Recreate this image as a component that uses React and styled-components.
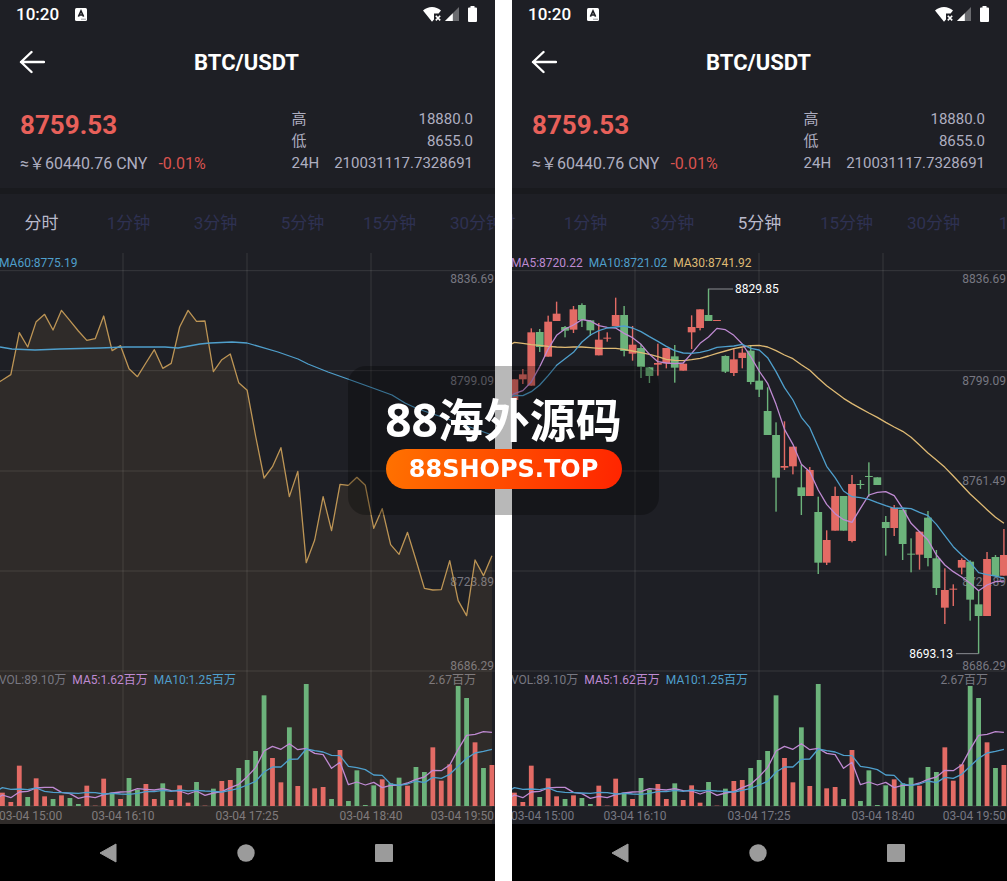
import React, { useLayoutEffect, useRef } from 'react'
import styled, { createGlobalStyle } from 'styled-components'

const RED = '#e36b65'
const GREEN = '#6cb37b'
const PURPLE = '#bf8ad2'
const BLUE = '#4f9fcc'
const GOLD = '#dfba74'
const AXIS = '#777781'

const GlobalStyle = createGlobalStyle`
  * {
    box-sizing: border-box;
  }
  body {
    margin: 0;
    background: #ffffff;
    font-family: Roboto, 'Noto Sans CJK SC', sans-serif;
  }
`

const Page = styled.main`
  display: grid;
  grid-template-columns: 1fr 1fr;
  gap: 17px;
`

const Phone = styled.section`
  display: flex;
  flex-direction: column;
  min-width: 0;
  overflow: hidden;
  background: #1e1f25;
  color: #ffffff;
`

const StatusBar = styled.div`
  display: flex;
  align-items: center;
  height: 28px;
  padding: 0 18px 0 16px;
`

const Clock = styled.span`
  margin-right: 16px;
  font-size: 17px;
  font-weight: 500;
  line-height: 28px;
`

const StatusIcons = styled.div`
  display: flex;
  align-items: center;
  gap: 4px;
  margin-left: auto;

  svg:last-child {
    margin-left: 5px;
  }
`

const Header = styled.header`
  display: grid;
  grid-template-columns: 40px 1fr 40px;
  align-items: center;
  height: 68px;
  padding: 0 14px 0 12px;
`

const BackButton = styled.button`
  display: flex;
  align-items: center;
  justify-content: center;
  height: 40px;
  padding: 0;
  border: 0;
  background: transparent;
  cursor: pointer;
`

const Title = styled.h1`
  margin: 0;
  font-size: 22px;
  font-weight: 700;
  text-align: center;
`

const Summary = styled.div`
  display: flex;
  justify-content: space-between;
  height: 98px;
  padding: 12px 22px 0 20px;
  border-bottom: 6px solid #191a1e;
  color: #aeaec0;
`

const Price = styled.div`
  font-size: 26px;
  font-weight: 700;
  line-height: 34px;
  color: #e8605a;
`

const Converted = styled.div`
  margin-top: 11px;
  font-size: 16px;
  line-height: 22px;
`

const Change = styled.span`
  margin-left: 11px;
  color: #d9534f;
`

const Stats = styled.dl`
  display: grid;
  grid-template-columns: auto auto;
  grid-auto-rows: 22px;
  column-gap: 15px;
  margin: 0;
  font-size: 15px;
  line-height: 23px;

  dd {
    margin: 0;
    text-align: right;
  }
`

const Tabs = styled.nav`
  display: flex;
  height: 51px;
  margin: 0 -2px;
  padding: 4px 0;
  overflow: hidden;
`

const Tab = styled.button`
  flex: 0 0 87px;
  padding: 7px 0 0;
  border: 0;
  background: transparent;
  font-family: inherit;
  font-size: 17px;
  line-height: 24px;
  color: ${(props) => (props.$active ? '#b9b9cb' : '#2e3152')};
  cursor: pointer;
`

const ChartSvg = styled.svg`
  display: block;
  width: 100%;
  height: auto;
  overflow: hidden;
`

const ChartText = styled.text`
  font-family: Roboto, 'Noto Sans CJK SC', sans-serif;
  font-size: 12px;
`

const NavBar = styled.footer`
  display: flex;
  align-items: center;
  justify-content: center;
  gap: 120px;
  height: 57px;
  padding-right: 4px;
  background: #000000;
`

const NavButton = styled.button`
  display: flex;
  padding: 0;
  border: 0;
  background: transparent;
  cursor: pointer;
`

const Overlay = styled.div`
  position: fixed;
  inset: 0;
  display: grid;
  place-items: center;
  pointer-events: none;
`

const Badge = styled.div`
  display: flex;
  flex-direction: column;
  align-items: center;
  gap: 7px;
  padding: 30px 37px 26px;
  border-radius: 18px;
  background: rgba(0, 0, 0, 0.28);
  color: #ffffff;
`

const BadgeTitle = styled.div`
  font-family: 'Noto Sans', 'Noto Sans CJK SC', sans-serif;
  font-size: 46px;
  font-weight: 700;
  line-height: 46px;
  white-space: nowrap;
`

const BadgePill = styled.div`
  width: 236px;
  border-radius: 20px;
  background: linear-gradient(100deg, #ff7200, #ff2400);
  font-family: 'DejaVu Sans', sans-serif;
  font-size: 24px;
  font-weight: 700;
  line-height: 40px;
  text-align: center;
`

// every chart series is stored in ticks, three ticks to a chart unit
const t = (ticks) => ticks / 3
const x = (i) => 2.4 + i * 8.44

const WIDTH = 495
const HEIGHT = 579
const BASE = 561
const VOLUME_TOP = 1260

const periods = ['分时', '1分钟', '3分钟', '5分钟', '15分钟', '30分钟', '1小时', '1天']

const rows = [77, 377, 678, 978, 1278]
const columns = [123, 247, 371]

const priceLabels = [
  ['8836.69', 38],
  ['8799.09', 140],
  ['8761.49', 240],
  ['8723.89', 341],
  ['8686.29', 425],
]

const timeLabels = [
  ['03-04 15:00', -1, 'start'],
  ['03-04 16:10', 123, 'middle'],
  ['03-04 17:25', 247, 'middle'],
  ['03-04 18:40', 371, 'middle'],
  ['03-04 19:50', 494, 'end'],
]

// u = up, d = down, ten to a row
const trend = [
  'uuuduududd',
  'uuududduud',
  'uuududuudd',
  'dduududuud',
  'udddduddud',
  'duuudduduu',
].join('')

const prices = [
  405, 389, 263, 306, 230, 208, 255, 196, 227, 258, 286, 281, 213, 317, 302, 371, 395, 354, 314, 370,
  355, 246, 196, 229, 228, 380, 344, 327, 413, 436, 573, 699, 665, 608, 755, 679, 953, 885, 755, 857,
  718, 721, 697, 721, 850, 791, 899, 928, 862, 945, 1030, 1035, 1034, 947, 1067, 1112, 945, 992, 932,
]

const ma60 = [
  [0, 102], [12, 104], [35, 105], [60, 104], [100, 103], [125, 102], [165, 102], [178, 103],
  [200, 99], [210, 98], [232, 97], [247, 98], [278, 107], [298, 114], [308, 119], [328, 127],
  [345, 133], [370, 142], [392, 150], [405, 158], [418, 164], [445, 173], [492, 190],
]

const ma5 = [
  446, 437, 411, 365, 312, 271, 252, 240, 224, 228, 242, 247, 249, 265, 278, 298, 328, 350, 354, 356,
  354, 325, 295, 276, 250, 254, 271, 297, 335, 378, 415, 478, 553, 598, 658, 680, 735, 778, 806, 824,
  832, 790, 750, 742, 740, 752, 790, 835, 860, 885, 930, 960, 980, 996, 1015, 1037, 1020, 1010, 1008,
]

const ma10 = [
  451, 452, 440, 420, 392, 361, 341, 322, 291, 270, 257, 249, 246, 243, 249, 260, 275, 289, 304, 317,
  324, 325, 322, 316, 307, 305, 303, 298, 310, 315, 338, 380, 428, 465, 517, 548, 606, 664, 698, 738,
  755, 758, 763, 773, 782, 790, 789, 791, 802, 812, 838, 872, 905, 930, 952, 983, 989, 993, 1000,
]

const ma30 = [
  292, 295, 299, 301, 304, 306, 307, 306, 306, 308, 310, 310, 310, 313, 318, 323, 328, 335, 343, 346,
  347, 344, 340, 333, 325, 318, 311, 306, 302, 301, 306, 317, 330, 341, 359, 376, 400, 422, 441, 460,
  476, 490, 504, 517, 532, 546, 559, 577, 600, 624, 645, 667, 693, 720, 747, 770, 794, 817, 835,
]

// body top, body bottom, high, low
const candles = [
  [403, 465, 403, 465], [388, 403, 372, 417], [262, 422, 250, 422], [261, 306, 252, 321],
  [230, 335, 212, 335], [206, 228, 170, 228], [246, 257, 243, 277], [193, 254, 183, 264],
  [180, 225, 175, 246], [226, 256, 226, 273], [284, 331, 234, 331], [278, 281, 262, 290],
  [210, 243, 158, 243], [210, 318, 183, 334], [299, 326, 243, 347], [309, 366, 297, 399],
  [367, 393, 367, 414], [354, 359, 296, 392], [309, 355, 309, 370], [334, 368, 300, 413],
  [356, 377, 356, 377], [246, 262, 211, 312], [193, 249, 193, 256], [210, 228, 131, 228],
  [225, 228, 225, 228], [333, 380, 331, 384], [343, 384, 309, 393], [323, 339, 310, 370],
  [317, 411, 300, 418], [407, 434, 350, 456], [498, 570, 427, 570], [570, 698, 532, 800],
  [663, 668, 529, 675], [605, 664, 605, 688], [727, 753, 660, 810], [675, 753, 666, 753],
  [801, 953, 755, 987], [885, 953, 856, 960], [753, 857, 725, 857], [753, 857, 753, 857],
  [717, 888, 690, 892], [717, 720, 705, 732], [693, 696, 652, 755], [697, 720, 697, 720],
  [831, 849, 813, 932], [788, 849, 780, 873], [794, 897, 794, 945], [926, 929, 880, 982],
  [860, 929, 858, 974], [818, 939, 798, 964], [940, 1029, 915, 1050], [1035, 1088, 970, 1137],
  [1031, 1034, 1018, 1083], [945, 968, 940, 988], [950, 1064, 946, 1127], [1078, 1113, 1038, 1226],
  [942, 1113, 921, 1113], [936, 993, 930, 995], [930, 992, 852, 992],
]

const volumes = [
  40, 12, 121, 27, 83, 29, 21, 32, 24, 6, 61, 1, 82, 40, 21, 84, 49, 66, 21, 68,
  18, 62, 10, 72, 1, 52, 75, 78, 114, 138, 165, 332, 144, 71, 236, 60, 366, 53, 57, 21,
  168, 15, 107, 3, 62, 80, 68, 85, 61, 117, 102, 176, 76, 125, 360, 324, 191, 114, 123,
]

const volumeMa5 = [
  390, 398, 381, 379, 369, 367, 367, 382, 386, 400, 394, 398, 389, 384, 381, 380, 371, 373, 375, 371,
  377, 378, 387, 378, 391, 384, 380, 368, 358, 335, 308, 258, 244, 253, 236, 254, 250, 265, 269, 310,
  292, 359, 351, 360, 352, 368, 361, 361, 354, 343, 336, 316, 317, 300, 253, 211, 208, 200, 202,
]

const volumeMa10 = [
  368, 373, 372, 374, 369, 379, 382, 383, 384, 385, 382, 383, 387, 385, 387, 388, 385, 380, 380, 376,
  379, 375, 378, 376, 378, 379, 381, 376, 370, 360, 349, 321, 306, 306, 283, 282, 252, 257, 261, 271,
  272, 304, 308, 314, 330, 331, 357, 361, 357, 348, 353, 337, 340, 328, 304, 280, 264, 259, 253,
]

const colorAt = (i) => (trend[i] === 'u' ? RED : GREEN)

const toPoints = (values, top = 0) => {
  const points = values.map((v, i) => `${x(i)},${t(v + top)}`)
  return [`-1,${t(values[0] + top + 6)}`, ...points].join(' ')
}

function Line({ points, color }) {
  return <polyline points={points} fill="none" stroke={color} strokeWidth="1.3" strokeLinejoin="round" />
}

function Legend({ y, items }) {
  return (
    <ChartText x={-1} y={y}>
      {items.map(([label, color], i) => (
        <tspan key={label} fill={color} dx={i ? 6 : 0}>
          {label}
        </tspan>
      ))}
    </ChartText>
  )
}

function Grid() {
  return (
    <g stroke="#ffffff" strokeOpacity="0.11">
      {rows.map((row) => (
        <line key={row} x1="0" x2={WIDTH} y1={t(row)} y2={t(row)} />
      ))}
      {columns.map((column) => (
        <line key={column} x1={column} x2={column} y1="8" y2={BASE} />
      ))}
      <line x1="0" x2={WIDTH} y1={BASE} y2={BASE} />
    </g>
  )
}

function Labels() {
  return (
    <g fill={AXIS}>
      {priceLabels.map(([label, y]) => (
        <ChartText key={label} x={494} y={y} textAnchor="end">
          {label}
        </ChartText>
      ))}
      {timeLabels.map(([label, left, anchor]) => (
        <ChartText key={label} x={left} y={575} textAnchor={anchor}>
          {label}
        </ChartText>
      ))}
      <ChartText x={476} y={439} textAnchor="end">
        2.67百万
      </ChartText>
    </g>
  )
}

function Volume() {
  return (
    <g>
      {volumes.map((v, i) => (
        <rect key={i} x={x(i) - 2.4} y={BASE - t(v)} width="4.8" height={t(v)} fill={colorAt(i)} />
      ))}
      <Line points={toPoints(volumeMa5, VOLUME_TOP)} color={PURPLE} />
      <Line points={toPoints(volumeMa10, VOLUME_TOP)} color={BLUE} />
      <Legend
        y={439}
        items={[
          ['VOL:89.10万', AXIS],
          ['MA5:1.62百万', PURPLE],
          ['MA10:1.25百万', BLUE],
        ]}
      />
    </g>
  )
}

function TimeSeries() {
  const points = toPoints(prices)
  return (
    <g>
      <polygon points={`${points} ${x(58)},${HEIGHT} -1,${HEIGHT}`} fill="#d2a050" fillOpacity="0.1" />
      <Line points={points} color="#bd9555" />
      <Line points={ma60.map((p) => p.join(',')).join(' ')} color={BLUE} />
      <Legend y={22} items={[['MA60:8775.19', BLUE]]} />
    </g>
  )
}

function Candles() {
  return (
    <g>
      {candles.map(([top, bottom, high, low], i) => (
        <g key={i} fill={colorAt(i)}>
          <rect x={x(i) - 0.7} y={t(high)} width="1.4" height={t(low - high)} />
          <rect x={x(i) - 3.9} y={t(top)} width="7.8" height={t(bottom - top)} />
        </g>
      ))}
      <Line points={toPoints(ma30)} color={GOLD} />
      <Line points={toPoints(ma5)} color={PURPLE} />
      <Line points={toPoints(ma10)} color={BLUE} />
      <Legend
        y={22}
        items={[
          ['MA5:8720.22', PURPLE],
          ['MA10:8721.02', BLUE],
          ['MA30:8741.92', GOLD],
        ]}
      />
      <g stroke="#8a8d92">
        <line x1={x(23)} x2="221" y1={t(132)} y2={t(132)} />
        <line x1="444" x2={x(55)} y1={t(1226)} y2={t(1226)} />
      </g>
      <ChartText x={223} y={48} fill="#ffffff">
        8829.85
      </ChartText>
      <ChartText x={441} y={413} fill="#ffffff" textAnchor="end">
        8693.13
      </ChartText>
    </g>
  )
}

function StatusRow() {
  return (
    <StatusBar>
      <Clock>10:20</Clock>
      <svg width="12" height="13" viewBox="0 0 12 13">
        <rect width="12" height="13" rx="1.5" fill="#ffffff" />
        <path d="M3.4 8.6 L6 3 L8.6 8.6 M4.4 7 H7.6" fill="none" stroke="#1e1f25" strokeWidth="1.6" />
        <path d="M6 11.2 H11" stroke="#9a9a9e" strokeWidth="1" />
      </svg>
      <StatusIcons>
        <svg width="18" height="15" viewBox="0 0 18 15">
          <path d="M0 3.6 C5 -1.2 13 -1.2 18 3.6 L15.6 6.6 H11 V12.4 L9 14.8 Z" fill="#ffffff" />
          <path d="M12.8 8.8 L17.2 13.4 M17.2 8.8 L12.8 13.4" stroke="#ffffff" strokeWidth="1.6" />
        </svg>
        <svg width="14" height="14" viewBox="0 0 14 14">
          <path d="M14 0 V14 H0 Z" fill="#6a6b6f" />
          <path d="M7.8 6.2 V14 H0 Z" fill="#ffffff" />
        </svg>
        <svg width="9" height="16" viewBox="0 0 9 16">
          <path d="M2.5 0 H6.5 V1.6 H8 Q9 1.6 9 2.6 V15 Q9 16 8 16 H1 Q0 16 0 15 V2.6 Q0 1.6 1 1.6 H2.5 Z" fill="#ffffff" />
        </svg>
      </StatusIcons>
    </StatusBar>
  )
}

function PeriodTabs({ active }) {
  const strip = useRef(null)

  // keep the chosen period in the middle of the strip
  useLayoutEffect(() => {
    const nav = strip.current
    const tab = nav.children[active]
    nav.scrollLeft = tab.offsetLeft - nav.offsetLeft + tab.offsetWidth / 2 - nav.offsetWidth / 2
  }, [active])

  return (
    <Tabs ref={strip}>
      {periods.map((period, i) => (
        <Tab key={period} type="button" $active={i === active}>
          {period}
        </Tab>
      ))}
    </Tabs>
  )
}

function Market({ active, children }) {
  return (
    <Phone>
      <StatusRow />
      <Header>
        <BackButton type="button" aria-label="返回">
          <svg width="26" height="24" viewBox="0 0 26 24">
            <path
              d="M12.5 2 L2 12 L12.5 22 M2 12 H25"
              fill="none"
              stroke="#ffffff"
              strokeWidth="2.4"
              strokeLinecap="round"
              strokeLinejoin="round"
            />
          </svg>
        </BackButton>
        <Title>BTC/USDT</Title>
      </Header>
      <Summary>
        <div>
          <Price>8759.53</Price>
          <Converted>
            ≈￥60440.76 CNY<Change>-0.01%</Change>
          </Converted>
        </div>
        <Stats>
          <dt>高</dt>
          <dd>18880.0</dd>
          <dt>低</dt>
          <dd>8655.0</dd>
          <dt>24H</dt>
          <dd>210031117.7328691</dd>
        </Stats>
      </Summary>
      <PeriodTabs active={active} />
      <ChartSvg viewBox={`0 0 ${WIDTH} ${HEIGHT}`}>
        <Grid />
        <Labels />
        {children}
        <Volume />
      </ChartSvg>
      <NavBar>
        <NavButton type="button" aria-label="后退">
          <svg width="18" height="20" viewBox="0 0 18 20">
            <path d="M17 1 V19 L1 10 Z" fill="#9b9b9b" stroke="#9b9b9b" strokeLinejoin="round" />
          </svg>
        </NavButton>
        <NavButton type="button" aria-label="主页">
          <svg width="18" height="18" viewBox="0 0 18 18">
            <circle cx="9" cy="9" r="8.7" fill="#9b9b9b" />
          </svg>
        </NavButton>
        <NavButton type="button" aria-label="最近">
          <svg width="18" height="18" viewBox="0 0 18 18">
            <rect width="18" height="18" rx="1" fill="#9b9b9b" />
          </svg>
        </NavButton>
      </NavBar>
    </Phone>
  )
}

function App() {
  return (
    <>
      <GlobalStyle />
      <Page>
        <Market active={0}>
          <TimeSeries />
        </Market>
        <Market active={3}>
          <Candles />
        </Market>
      </Page>
      <Overlay>
        <Badge>
          <BadgeTitle>88海外源码</BadgeTitle>
          <BadgePill>88SHOPS.TOP</BadgePill>
        </Badge>
      </Overlay>
    </>
  )
}

export default App
